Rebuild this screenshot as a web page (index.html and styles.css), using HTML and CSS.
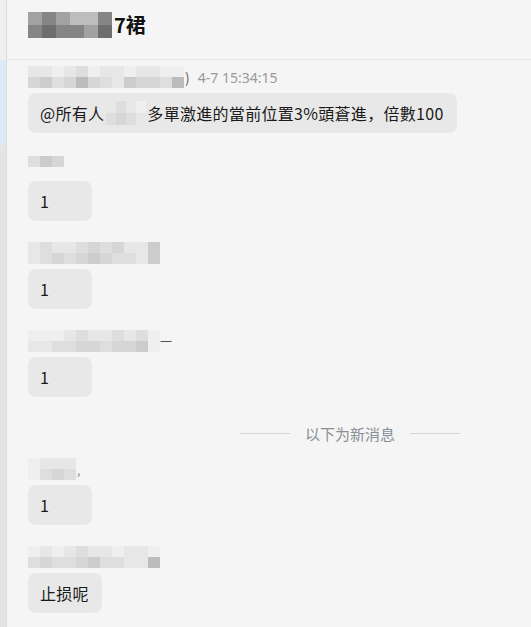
FILE: index.html
```html
<!DOCTYPE html>
<html>
<head>
<meta charset="utf-8">
<link rel="stylesheet" href="styles.css">
</head>
<body>
<div class="app">
  <div class="rail">
    <div class="rail-top"></div>
    <div class="rail-active"></div>
    <div class="rail-rest"></div>
  </div>
  <div class="chat">
    <div class="header">
      <div class="mosaic mh">
        <div class="mrow"><span class="k3"></span><span class="k2"></span><span class="k3"></span><span class="k4"></span><span class="k4"></span><span class="k2"></span></div>
        <div class="mrow"><span class="k2"></span><span class="k1"></span><span class="k2"></span><span class="k2"></span><span class="k3"></span><span class="k1"></span></div>
      </div>
      <span class="title">7裙</span>
    </div>
    <div class="list">
      <div class="msg">
        <div class="sender">
          <div class="mosaic ml">
            <div class="mrow"><span class="c1"></span><span class="c1"></span><span class="c0"></span><span class="c1"></span><span class="c2"></span><span class="c0"></span><span class="c1"></span><span class="c1"></span><span class="c0"></span><span class="c1"></span><span class="c1"></span><span class="c0"></span><span class="c0"></span></div>
            <div class="mrow"><span class="c3"></span><span class="c4"></span><span class="c2"></span><span class="c3"></span><span class="c5"></span><span class="c3"></span><span class="c2"></span><span class="c1"></span><span class="c4"></span><span class="c3"></span><span class="c3"></span><span class="c2"></span><span class="c5"></span></div>
          </div>
          <span class="paren">)</span>
          <span class="time">4-7 15:34:15</span>
        </div>
        <div class="bubble">@所有人<span class="mosaic mi"><span class="mrow"><span class="c1"></span><span class="c2"></span><span class="c1"></span><span class="c0"></span></span><span class="mrow"><span class="c2"></span><span class="c3"></span><span class="c2"></span><span class="c1"></span></span></span>多單激進的當前位置3%頭蒼進，倍數100</div>
      </div>

      <div class="msg">
        <div class="sender">
          <div class="mosaic ml short">
            <div class="mrow"><span class="c2"></span><span class="c4"></span><span class="c3"></span></div>
          </div>
        </div>
        <div class="bubble">1</div>
      </div>

      <div class="msg">
        <div class="sender">
          <div class="mosaic ml">
            <div class="mrow"><span class="c1"></span><span class="c2"></span><span class="c1"></span><span class="c1"></span><span class="c2"></span><span class="c3"></span><span class="c2"></span><span class="c3"></span><span class="c1"></span><span class="c1"></span><span class="c4"></span></div>
            <div class="mrow"><span class="c1"></span><span class="c2"></span><span class="c3"></span><span class="c2"></span><span class="c3"></span><span class="c4"></span><span class="c3"></span><span class="c2"></span><span class="c2"></span><span class="c1"></span><span class="c4"></span></div>
          </div>
        </div>
        <div class="bubble">1</div>
      </div>

      <div class="msg">
        <div class="sender">
          <div class="mosaic ml">
            <div class="mrow"><span class="c0"></span><span class="c0"></span><span class="c0"></span><span class="c1"></span><span class="c2"></span><span class="c1"></span><span class="c1"></span><span class="c2"></span><span class="c1"></span><span class="c2"></span><span class="c0"></span></div>
            <div class="mrow"><span class="c1"></span><span class="c1"></span><span class="c2"></span><span class="c2"></span><span class="c3"></span><span class="c3"></span><span class="c2"></span><span class="c3"></span><span class="c3"></span><span class="c4"></span><span class="c0"></span></div>
          </div>
          <span class="dash">一</span>
        </div>
        <div class="bubble">1</div>
      </div>

      <div class="divider"><span class="line"></span><span class="dtext">以下为新消息</span><span class="line"></span></div>

      <div class="msg">
        <div class="sender">
          <div class="mosaic ml">
            <div class="mrow"><span class="c0"></span><span class="c1"></span><span class="c1"></span><span class="c1"></span></div>
            <div class="mrow"><span class="c0"></span><span class="c2"></span><span class="c3"></span><span class="c2"></span></div>
          </div>
          <span class="paren small">,</span>
        </div>
        <div class="bubble">1</div>
      </div>

      <div class="msg">
        <div class="sender">
          <div class="mosaic ml">
            <div class="mrow"><span class="c0"></span><span class="c1"></span><span class="c0"></span><span class="c1"></span><span class="c2"></span><span class="c1"></span><span class="c1"></span><span class="c0"></span><span class="c1"></span><span class="c1"></span><span class="c0"></span></div>
            <div class="mrow"><span class="c2"></span><span class="c3"></span><span class="c2"></span><span class="c2"></span><span class="c3"></span><span class="c4"></span><span class="c2"></span><span class="c2"></span><span class="c1"></span><span class="c1"></span><span class="c5"></span></div>
          </div>
        </div>
        <div class="bubble">止损呢</div>
      </div>
    </div>
  </div>
</div>
</body>
</html>
```
FILE: styles.css
```css
html, body {
  margin: 0;
  padding: 0;
  background: #f5f5f5;
}
body {
  font-family: "Noto Sans CJK SC", "Microsoft YaHei", sans-serif;
  color: #1a1a1a;
}
.app {
  display: flex;
  width: 531px;
  height: 627px;
  overflow: hidden;
}
.rail {
  width: 6px;
  flex: none;
  display: flex;
  flex-direction: column;
  border-right: 1px solid #dcdcdc;
}
.rail-top { height: 60px; flex: none; background: #efefef; }
.rail-active { height: 85px; flex: none; background: #dde9f8; }
.rail-rest { flex: 1; background: #e4e4e4; }
.chat {
  flex: 1;
  display: flex;
  flex-direction: column;
  background: #f5f5f5;
}
.header {
  flex: none;
  height: 60px;
  box-sizing: border-box;
  border-bottom: 1px solid #e6e6e6;
  display: flex;
  align-items: flex-start;
  padding: 12px 0 0 21px;
}
.title {
  font-size: 20px;
  font-weight: 700;
  color: #111;
  margin-left: 2px;
  line-height: 26px;
}
.list {
  flex: none;
  padding: 5px 0 0 21px;
  display: flex;
  flex-direction: column;
}
.msg {
  display: flex;
  flex-direction: column;
  align-items: flex-start;
  margin-bottom: 20px;
}
.sender {
  height: 24px;
  display: flex;
  align-items: center;
  margin-bottom: 4px;
}
.mosaic {
  display: inline-flex;
  flex-direction: column;
}
.mrow { display: flex; }
.mh .mrow span { width: 14px; height: 13px; }
.ml .mrow span { width: 12px; height: 11px; }
.mi { margin: 0 1px 0 2px; vertical-align: middle; }
.mi .mrow span { width: 10px; height: 12px; }
.short { margin-top: -8px; }
.k1 { background: #6e6e6e; }
.k2 { background: #858585; }
.k3 { background: #a2a2a2; }
.k4 { background: #bdbdbd; }
.c0 { background: #efefef; }
.c1 { background: #e7e7e7; }
.c2 { background: #dedede; }
.c3 { background: #d6d6d6; }
.c4 { background: #cccccc; }
.c5 { background: #bcbcbc; }
.paren {
  font-size: 14px;
  color: #666;
  margin-left: 1px;
}
.paren.small { font-size: 12px; color: #888; }
.dash { font-size: 12px; color: #555; }
.time {
  font-size: 14px;
  color: #999;
  margin-left: 8px;
  font-family: "Noto Sans", "Microsoft YaHei", sans-serif;
}
.bubble {
  height: 40px;
  box-sizing: border-box;
  padding: 0 13px 0 12px;
  min-width: 64px;
  display: flex;
  align-items: center;
  background: #e8e8e8;
  border-radius: 8px;
  font-size: 16px;
  letter-spacing: 0.3px;
  color: #1a1a1a;
}
.divider {
  display: flex;
  align-items: center;
  height: 20px;
  margin: 6px 0 14px 212px;
}
.line {
  width: 50px;
  height: 1px;
  background: #d6d6d6;
}
.dtext {
  font-size: 15px;
  color: #8a8f97;
  margin: 0 15px;
}
```
